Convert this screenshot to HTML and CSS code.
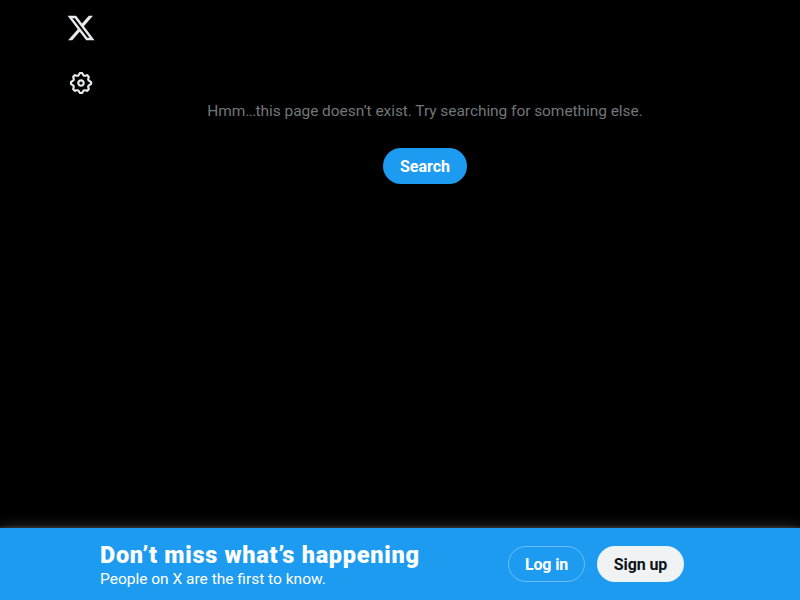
FILE: index.html
```html
<!DOCTYPE html>
<html lang="en">
<head>
<meta charset="utf-8">
<title>Page not found / X</title>
<link rel="stylesheet" href="styles.css">
</head>
<body>
<div class="page">
  <header class="rail">
    <svg class="logo" viewBox="0 0 24 24" aria-label="X"><path d="M18.244 2.25h3.308l-7.227 8.26 8.502 11.24H16.17l-5.214-6.817L4.99 21.75H1.68l7.73-8.835L1.254 2.25H8.08l4.713 6.231zm-1.161 17.52h1.833L7.084 4.126H5.117z"/></svg>
    <svg class="gear" viewBox="0 0 24 24" aria-label="Settings"><path d="M10.54 1.75h2.92l1.57 2.36c.11.17.32.25.53.21l2.53-.59 2.17 2.17-.58 2.54c-.05.2.04.41.21.53l2.36 1.57v2.92l-2.36 1.57c-.17.12-.26.33-.21.53l.58 2.54-2.17 2.17-2.53-.59c-.21-.04-.42.04-.53.21l-1.57 2.36h-2.92l-1.58-2.36c-.11-.17-.32-.25-.52-.21l-2.54.59-2.17-2.17.58-2.54c.05-.2-.03-.41-.21-.53l-2.35-1.57v-2.92L4.1 8.97c.18-.12.26-.33.21-.53L3.73 5.9 5.9 3.73l2.54.59c.2.04.41-.04.52-.21l1.58-2.36zm1.07 2l-.98 1.47C10.05 6.08 9 6.5 7.99 6.27l-1.46-.34-.6.6.33 1.46c.24 1.01-.18 2.07-1.05 2.64l-1.46.98v.78l1.46.98c.87.57 1.29 1.63 1.05 2.64l-.33 1.46.6.6 1.46-.34c1.01-.23 2.06.19 2.64 1.05l.98 1.47h.78l.97-1.47c.58-.86 1.63-1.28 2.65-1.05l1.45.34.61-.6-.34-1.46c-.23-1.01.18-2.07 1.05-2.64l1.47-.98v-.78l-1.47-.98c-.87-.57-1.28-1.63-1.05-2.64l.34-1.46-.61-.6-1.45.34c-1.02.23-2.07-.19-2.65-1.05l-.97-1.47h-.78zM12 10.5c-.83 0-1.5.67-1.5 1.5s.67 1.5 1.5 1.5c.82 0 1.5-.67 1.5-1.5s-.68-1.5-1.5-1.5zM8.5 12c0-1.93 1.56-3.5 3.5-3.5 1.93 0 3.5 1.57 3.5 3.5s-1.57 3.5-3.5 3.5c-1.94 0-3.5-1.57-3.5-3.5z"/></svg>
  </header>
  <main class="main">
    <p class="message"><span>Hmm<span class="dots">...</span>this page doesn’t exist. Try searching for something else.</span></p>
    <a class="button search"><span>Search</span></a>
  </main>
  <footer class="bar">
    <div class="pitch">
      <div class="title"><span>Don’t miss what’s happening</span></div>
      <div class="subtitle"><span>People on X are the first to know.</span></div>
    </div>
    <a class="button login"><span>Log in</span></a>
    <a class="button signup"><span>Sign up</span></a>
  </footer>
</div>
</body>
</html>
```
FILE: styles.css
```css
* { box-sizing: border-box; }
body { margin: 0; background: #000; font-family: Roboto, "Liberation Sans", sans-serif; font-size: 15.5px; color: #fff; }
.page { height: 600px; display: grid; grid-template-columns: 100px 650px 50px; grid-template-rows: 528px 72px; overflow: hidden; }
.rail { display: flex; flex-direction: column; align-items: center; padding: 13px 0.5px 0 62.5px; gap: 27px; }
.rail svg { flex: none; fill: #e7e9ea; }
.logo { width: 30px; height: 30px; }
.gear { width: 26px; height: 26px; margin-right: 1px; }
.main { display: flex; flex-direction: column; align-items: center; padding-top: 101px; }
.message { margin: 0 0 27px; line-height: 20px; color: #71767b; letter-spacing: -.06px; white-space: nowrap; }
.dots { letter-spacing: -.7px; }
.button { display: flex; align-items: center; justify-content: center; height: 36px; padding-top: 1px; border-radius: 18px; font-size: 16px; font-weight: 700; white-space: nowrap; }
.search { width: 84px; background: #1d9bf0; }
.bar { grid-column: 1 / -1; display: flex; align-items: center; padding-left: 100px; background: #1d9bf0; box-shadow: 0 0 15px rgba(255, 255, 255, .2), 0 0 3px 1px rgba(255, 255, 255, .15); }
.pitch { width: 408px; padding-top: 2px; white-space: nowrap; }
.title { font-size: 23.5px; line-height: 28px; font-weight: 900; letter-spacing: .72px; }
.subtitle { line-height: 20px; }
.login { width: 77px; margin-right: 12px; border: 1px solid rgba(255, 255, 255, .35); letter-spacing: -.15px; }
.signup { width: 87px; background: #eff3f4; color: #0f1419; letter-spacing: -.1px; }
```
